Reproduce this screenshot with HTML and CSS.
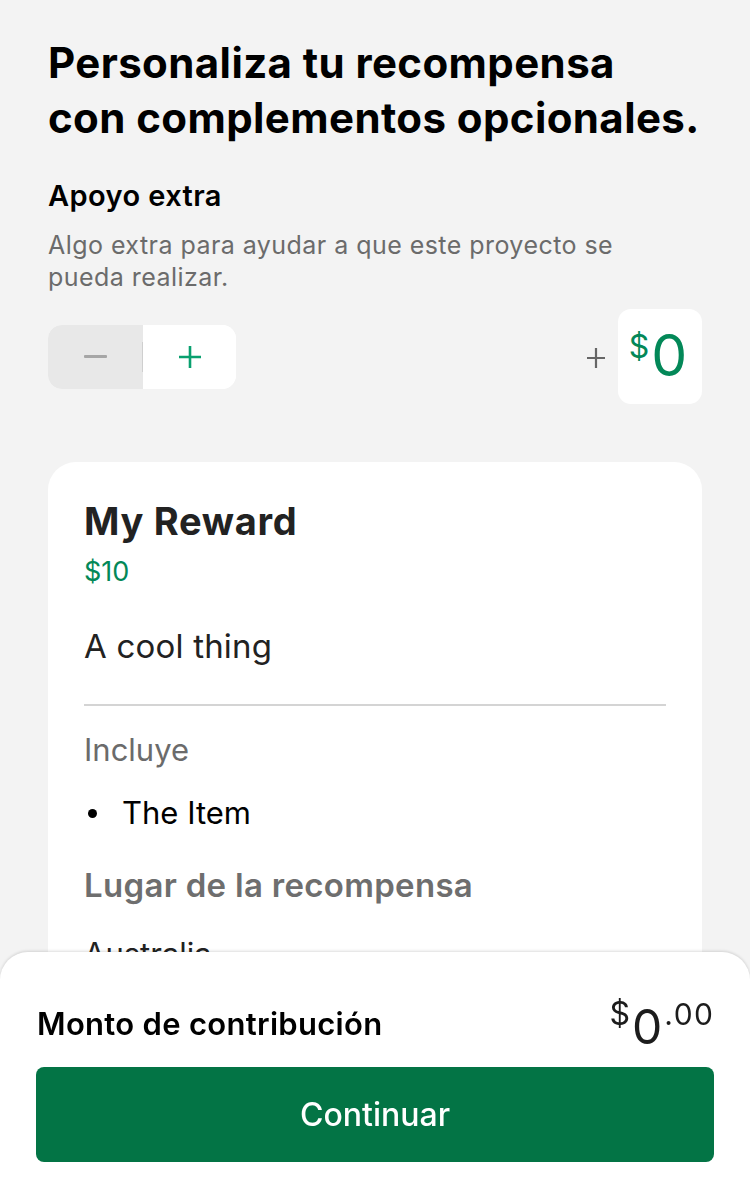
FILE: index.html
```html
<!DOCTYPE html>
<html lang="es">
<head>
<meta charset="utf-8">
<link rel="stylesheet" href="styles.css">
</head>
<body>
<main class="page">
  <h1 class="title">Personaliza tu recompensa<br>con complementos opcionales.</h1>
  <section class="extra">
    <h2 class="extra-title">Apoyo extra</h2>
    <p class="extra-desc">Algo extra para ayudar a que este proyecto se pueda realizar.</p>
    <div class="extra-row">
      <div class="stepper">
        <button class="step minus" aria-label="menos"><span class="minus-bar"></span></button>
        <span class="step-divider"></span>
        <button class="step plus" aria-label="más">
          <svg width="24" height="24" viewBox="0 0 24 24"><path d="M12 1v22M1 12h22" stroke="#09a06f" stroke-width="2.6" fill="none"/></svg>
        </button>
      </div>
      <div class="extra-amount">
        <svg class="extra-plus" width="18" height="20" viewBox="0 0 18 20"><path d="M9 0v20M0 10h18" stroke="#666" stroke-width="2.2" fill="none"/></svg>
        <div class="amount-box"><span class="sup">$</span><span class="big">0</span></div>
      </div>
    </div>
  </section>
  <article class="card">
    <h3 class="card-title">My Reward</h3>
    <div class="card-price">$10</div>
    <p class="card-desc">A cool thing</p>
    <hr class="card-rule">
    <div class="card-label">Incluye</div>
    <ul class="card-list"><li>The Item</li></ul>
    <div class="card-label strong">Lugar de la recompensa</div>
    <div class="card-text">Australia</div>
  </article>
</main>
<footer class="panel">
  <div class="panel-row">
    <span class="panel-label">Monto de contribución</span>
    <span class="panel-amount"><span class="p-sup p-cur">$</span><span class="p-big">0</span><span class="p-sup p-cents">.00</span></span>
  </div>
  <button class="cta">Continuar</button>
</footer>
</body>
</html>
```
FILE: styles.css
```css
* { box-sizing: border-box; }
html, body { margin: 0; padding: 0; }
body {
  background: #f3f3f3;
  font-family: Inter, "Noto Sans", sans-serif;
  color: #000;
  width: 750px;
  height: 1200px;
  overflow: hidden;
}
.page { padding: 35px 48px 0 48px; }
.title {
  margin: 0;
  font-size: 42px;
  line-height: 55px;
  font-weight: 700;
  letter-spacing: 0.4px;
}
.extra { margin-top: 33px; }
.extra-title {
  margin: 0;
  font-size: 29px;
  line-height: 36px;
  font-weight: 600;
  letter-spacing: 0.4px;
}
.extra-desc {
  margin: 15px 0 0 0;
  font-size: 25px;
  line-height: 32px;
  color: #6b6b6b;
  letter-spacing: 0.45px;
  max-width: 620px;
}
.extra-row {
  margin-top: 16px;
  display: flex;
  align-items: center;
  justify-content: space-between;
}
.stepper {
  display: flex;
  align-items: center;
  height: 64px;
  width: 188px;
  border-radius: 14px;
  overflow: hidden;
  background: #fff;
}
.step {
  border: 0;
  padding: 0;
  height: 100%;
  display: flex;
  align-items: center;
  justify-content: center;
  cursor: pointer;
}
.minus { width: 94px; background: #e8e8e8; }
.minus-bar { width: 23px; height: 3px; background: #a6a6a6; border-radius: 1px; }
.step-divider { width: 1px; height: 100%; background: #e8e8e8; }
.step-divider::after { content: ""; display: block; width: 1px; height: 30px; margin-top: 17px; background: #cfcfcf; }
.plus { flex: 1; background: #fff; }
.extra-amount { display: flex; align-items: center; gap: 13px; }
.extra-plus { display: block; margin-top: 2px; }
.amount-box {
  width: 84px;
  height: 95px;
  background: #fff;
  border-radius: 13px;
  display: flex;
  justify-content: center;
  align-items: flex-start;
  padding: 18px 0 0 0;
  color: #038858;
}
.amount-box .sup { font-size: 32px; line-height: 32px; margin: 4px 2px 0 -4px; }
.amount-box .big { font-size: 57px; line-height: 57px; }
.card {
  margin-top: 58px;
  background: #fff;
  border-radius: 28px;
  padding: 36px 36px 40px 36px;
}
.card-title { margin: 0; font-size: 38px; line-height: 46px; font-weight: 700; color: #222; letter-spacing: 0.7px; }
.card-price { font-size: 27px; line-height: 34px; color: #038858; margin-top: 11px; }
.card-desc { margin: 37px 0 0 0; font-size: 33px; line-height: 40px; color: #222; letter-spacing: 0.2px; }
.card-rule { border: 0; height: 2px; background: #d4d4d4; margin: 38px 0 0 0; }
.card-label { font-size: 31px; line-height: 38px; color: #6b6b6b; margin-top: 25px; }
.card-label.strong { font-weight: 600; font-size: 33px; line-height: 40px; margin-top: 33px; letter-spacing: 0.3px; color: #6e6e6e; }
.card-list { margin: 25px 0 0 0; padding: 0; list-style: none; font-size: 31px; line-height: 38px; color: #000; }
.card-list li::before {
  content: "";
  display: inline-block;
  width: 9px;
  height: 9px;
  border-radius: 50%;
  background: #000;
  margin: 0 25px 0 4px;
  vertical-align: 6px;
}
.card-text { font-size: 31px; line-height: 38px; margin-top: 30px; color: #222; }
.panel {
  position: fixed;
  left: 0;
  right: 0;
  bottom: 0;
  height: 248px;
  background: #fff;
  border-radius: 28px 28px 0 0;
  box-shadow: 0 -1px 3px rgba(0,0,0,0.14);
  padding: 47px 36px 0 37px;
}
.panel-row { display: flex; justify-content: space-between; align-items: flex-start; }
.panel-label { font-size: 31px; line-height: 38px; font-weight: 600; margin-top: 6px; letter-spacing: 0.3px; }
.panel-amount { display: flex; align-items: flex-start; color: #1c1c1c; margin-right: 1px; }
.p-sup { font-size: 30px; line-height: 30px; }
.p-cur { font-size: 32px; line-height: 30px; margin-right: 2px; }
.p-cents { letter-spacing: 1.5px; margin-right: -1.5px; margin-left: 2px; }
.p-big { font-size: 48px; line-height: 48px; margin-top: 4px; }
.cta {
  display: block;
  margin: 16px 0 0 -1px;
  width: 678px;
  height: 95px;
  border: 0;
  border-radius: 8px;
  background: #037445;
  color: #fff;
  font-family: Inter, "Noto Sans", sans-serif;
  font-size: 32px;
  font-weight: 500;
}
```
